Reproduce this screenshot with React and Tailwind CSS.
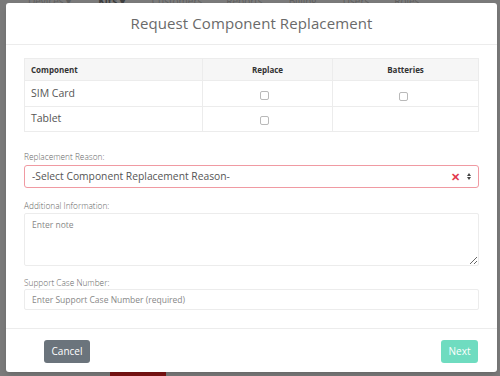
import { useState } from "react";

const navItems = [
  { label: "Devices ▾", x: "ml-[28px]" },
  { label: "Kits ▾", x: "ml-[27px]", active: true },
  { label: "Customers", x: "ml-[27px]" },
  { label: "Reports", x: "ml-[24px]" },
  { label: "Billing", x: "ml-[26px]" },
  { label: "Users", x: "ml-[26px]" },
  { label: "Roles", x: "ml-[25px]" },
];

function Check() {
  return (
    <span className="inline-block w-[9px] h-[9px] rounded-[2px] border border-[#b9b9b9] bg-white" />
  );
}

export default function App() {
  const [note, setNote] = useState("");
  const [caseNo, setCaseNo] = useState("");

  return (
    <div
      className="relative w-[500px] h-[376px] overflow-hidden bg-[#7a7a7a]"
      style={{ fontFamily: '"Open Sans", "Liberation Sans", sans-serif' }}
    >
      {/* page behind the overlay */}
      <div className="flex items-start h-[12px] text-[10px] leading-none text-[#5e5e5e]">
        {navItems.map((n) => (
          <span
            key={n.label}
            className={`${n.x} -mt-[4px] ${n.active ? "font-bold text-[#3f3f3f]" : ""}`}
          >
            {n.label}
          </span>
        ))}
      </div>
      <div className="absolute left-[110px] top-[370px] w-[56px] h-[10px] bg-[#7d1414]" />

      {/* modal */}
      <div className="absolute left-[6px] top-[3px] w-[491px] h-[369px] bg-white rounded-[3px] flex flex-col shadow-md">
        <div className="h-[42px] flex items-center justify-center border-b border-[#ececec]">
          <h1 className="text-[15px] text-[#6a6a6a] tracking-[0.1px]">
            Request Component Replacement
          </h1>
        </div>

        <div className="px-[18px] pt-[13px] pb-[18px] border-b border-[#ececec]">
          <table className="w-full border-collapse text-[#444]">
            <thead>
              <tr className="bg-[#f6f6f6] h-[22px]">
                <th className="w-[178px] border border-[#ececec] text-left pl-[6px] text-[8px] font-bold text-[#333]">
                  Component
                </th>
                <th className="w-[130px] border border-[#ececec] text-center text-[8px] font-bold text-[#333]">
                  Replace
                </th>
                <th className="border border-[#ececec] text-center text-[8px] font-bold text-[#333]">
                  Batteries
                </th>
              </tr>
            </thead>
            <tbody>
              <tr className="h-[26px]">
                <td className="border border-[#ececec] pl-[6px] text-[10.5px] text-[#555]">SIM Card</td>
                <td className="border border-[#ececec] text-center leading-none">
                  <span className="inline-block -ml-[6px] -mt-[2px]"><Check /></span>
                </td>
                <td className="border border-[#ececec] text-center leading-none">
                  <span className="inline-block -ml-[4px] mt-[2px]"><Check /></span>
                </td>
              </tr>
              <tr className="h-[25px]">
                <td className="border border-[#ececec] pl-[6px] text-[10.5px] text-[#555]">Tablet</td>
                <td className="border border-[#ececec] text-center leading-none">
                  <span className="inline-block -ml-[6px]"><Check /></span>
                </td>
                <td className="border border-[#ececec]" />
              </tr>
            </tbody>
          </table>

          <label className="block mt-[20px] text-[8.3px] font-light text-[#666] leading-[10px]">
            Replacement Reason:
          </label>
          <div className="mt-[3px] h-[23px] flex items-center rounded-[3px] border border-[#f09aa2] pl-[7px] pr-[7px]">
            <span className="flex-1 text-[10.3px] text-[#555]">-Select Component Replacement Reason-</span>
            <span className="text-[#e23a4e] text-[11px] font-bold leading-none">✕</span>
            <span className="ml-[7px] flex flex-col items-center leading-none">
              <span className="w-0 h-0 border-l-[2.5px] border-r-[2.5px] border-b-[3px] border-l-transparent border-r-transparent border-b-[#444]" />
              <span className="mt-[1px] w-0 h-0 border-l-[2.5px] border-r-[2.5px] border-t-[3px] border-l-transparent border-r-transparent border-t-[#444]" />
            </span>
          </div>

          <label className="block mt-[13px] text-[8.3px] font-light text-[#666] leading-[10px]">
            Additional Information:
          </label>
          <textarea
            value={note}
            onChange={(e) => setNote(e.target.value)}
            placeholder="Enter note"
            className="mt-[2px] block w-full h-[53px] border border-[#ececec] rounded-[2px] px-[7px] py-[5px] text-[8.5px] text-[#555] placeholder:text-[#888] outline-none resize-y"
          />

          <label className="block mt-[12px] text-[8.3px] font-light text-[#666] leading-[10px]">
            Support Case Number:
          </label>
          <input
            value={caseNo}
            onChange={(e) => setCaseNo(e.target.value)}
            placeholder="Enter Support Case Number (required)"
            className="mt-[1px] block w-full h-[21px] border border-[#ececec] rounded-[2px] px-[7px] text-[8.5px] text-[#555] placeholder:text-[#888] outline-none"
          />
        </div>

        <div className="flex-1 flex items-start justify-between pl-[38px] pr-[19px] pt-[11px]">
          <button className="h-[23px] w-[46px] rounded-[3px] bg-[#6b747c] text-white text-[10px]">
            Cancel
          </button>
          <button className="h-[23px] w-[37px] rounded-[3px] bg-[#6fdcc0] text-white text-[10px]">
            Next
          </button>
        </div>
      </div>
    </div>
  );
}
